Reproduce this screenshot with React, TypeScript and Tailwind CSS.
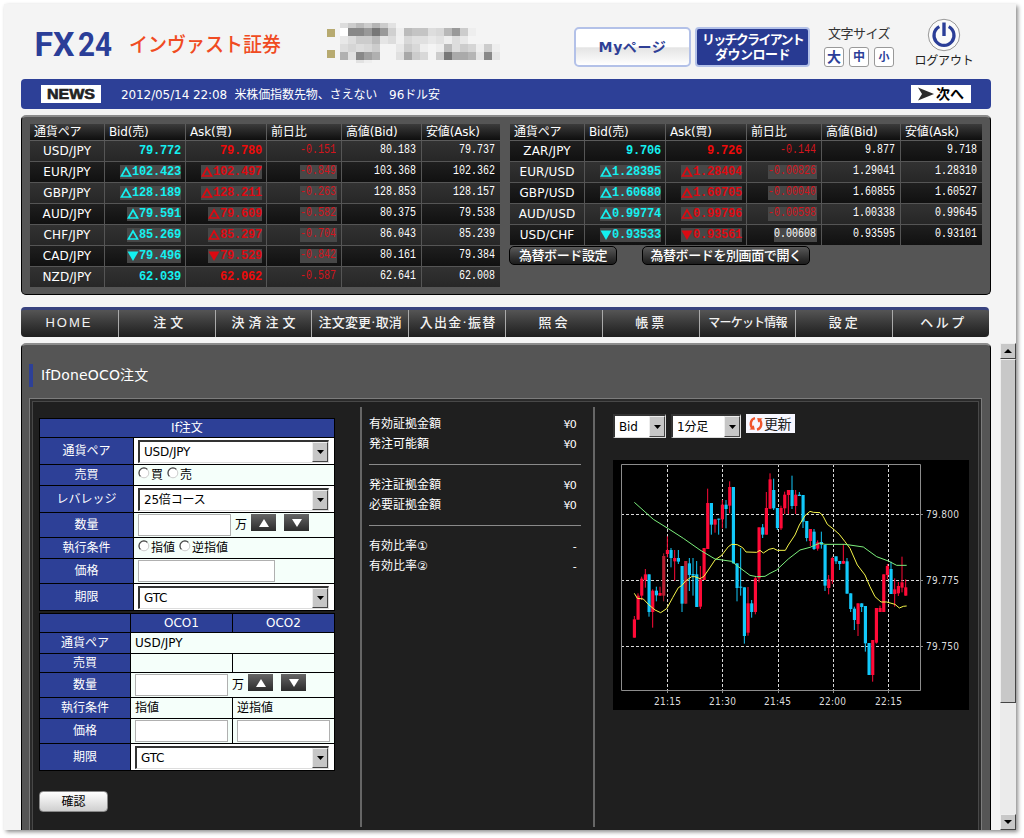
import { ReactNode } from "react"
import clsx from "clsx"

type Tick = "up" | "down" | ""

type Quote = {
  pair: string
  bid: string
  ask: string
  diff: string
  high: string
  low: string
  tick: Tick
}

const JPY_QUOTES: Quote[] = [
  { pair: "USD/JPY", bid: "79.772", ask: "79.780", diff: "-0.151", high: "80.183", low: "79.737", tick: "" },
  { pair: "EUR/JPY", bid: "102.423", ask: "102.497", diff: "-0.849", high: "103.368", low: "102.362", tick: "up" },
  { pair: "GBP/JPY", bid: "128.189", ask: "128.211", diff: "-0.263", high: "128.853", low: "128.157", tick: "up" },
  { pair: "AUD/JPY", bid: "79.591", ask: "79.609", diff: "-0.582", high: "80.375", low: "79.538", tick: "up" },
  { pair: "CHF/JPY", bid: "85.269", ask: "85.297", diff: "-0.704", high: "86.043", low: "85.239", tick: "up" },
  { pair: "CAD/JPY", bid: "79.496", ask: "79.529", diff: "-0.842", high: "80.161", low: "79.384", tick: "down" },
  { pair: "NZD/JPY", bid: "62.039", ask: "62.062", diff: "-0.587", high: "62.641", low: "62.008", tick: "" },
]

const OTHER_QUOTES: Quote[] = [
  { pair: "ZAR/JPY", bid: "9.706", ask: "9.726", diff: "-0.144", high: "9.877", low: "9.718", tick: "" },
  { pair: "EUR/USD", bid: "1.28395", ask: "1.28404", diff: "-0.00826", high: "1.29041", low: "1.28310", tick: "up" },
  { pair: "GBP/USD", bid: "1.60680", ask: "1.60705", diff: "-0.00040", high: "1.60855", low: "1.60527", tick: "up" },
  { pair: "AUD/USD", bid: "0.99774", ask: "0.99796", diff: "-0.00598", high: "1.00338", low: "0.99645", tick: "up" },
  { pair: "USD/CHF", bid: "0.93533", ask: "0.93561", diff: "0.00608", high: "0.93595", low: "0.93101", tick: "down" },
]

const HEADINGS = ["通貨ペア", "Bid(売)", "Ask(買)", "前日比", "高値(Bid)", "安値(Ask)"]

const Tri = ({ tick }: { tick: Tick }) => {
  if (!tick) return null
  return (
    <svg width="12" height="12" viewBox="0 0 12 12" className="shrink-0">
      {tick === "up" ? (
        <path d="M6 2 L10.6 10 H1.4 Z" fill="none" stroke="currentColor" strokeWidth="1.7" />
      ) : (
        <path d="M0.5 1.5 H11.5 L6 11 Z" fill="currentColor" />
      )}
    </svg>
  )
}

const Price = ({ value, tick, className }: { value: string; tick: Tick; className: string }) => (
  <span
    className={clsx(
      "flex h-[14px] items-center font-['Liberation_Mono',monospace] text-[12px] font-bold tracking-[-0.2px]",
      tick && "bg-[#474747]",
      className,
    )}
  >
    <Tri tick={tick} />
    {value}
  </span>
)

// narrow fixed pitch digits, stretched to the height of the bold prices
const Num = ({ value }: { value: string }) => (
  <span className="inline-block origin-center scale-y-[1.22] font-['Liberation_Mono',monospace] text-[10px] leading-[14px]">
    {value}
  </span>
)

const Board = ({ quotes, cols, dark }: { quotes: Quote[]; cols: string; dark: number }) => (
  <div className="text-white">
    <div className={clsx("grid h-[17px] bg-linear-to-b from-[#3c3c3c] to-[#0c0c0c]", cols)}>
      {HEADINGS.map((h) => (
        <div
          key={h}
          className="flex items-center border-r border-b border-[#5c5c5c] pl-1 text-[12px] leading-none tracking-[-0.15px] whitespace-nowrap last:border-r-0"
        >
          {h}
        </div>
      ))}
    </div>
    {quotes.map((q, i) => (
      <div
        key={q.pair}
        className={clsx(
          "grid h-[21px] bg-linear-to-b [&>div]:flex [&>div]:items-center [&>div]:justify-end [&>div]:border-r [&>div]:border-b [&>div]:border-[#555] [&>div]:pr-1 [&>div:last-child]:border-r-0",
          cols,
          i % 2 === dark ? "from-[#1f1f1f] to-[#101010]" : "from-[#323232] to-[#262626]",
        )}
      >
        <div className="!justify-center !pr-0 text-[12px] tracking-[0.1px]">{q.pair}</div>
        <div>
          <Price value={q.bid} tick={q.tick} className="text-[#14f0f0]" />
        </div>
        <div>
          <Price value={q.ask} tick={q.tick} className={q.tick ? "text-[#dc0a12]" : "text-[#f00a0a]"} />
        </div>
        <div>
          <span
            className={clsx(
              "flex h-[14px] pr-px",
              q.tick && "bg-[#474747]",
              q.diff.startsWith("-") ? "text-[#d2141c]" : "text-white",
            )}
          >
            <Num value={q.diff} />
          </span>
        </div>
        <div className="!pr-[5px]">
          <Num value={q.high} />
        </div>
        <div className="!pr-[5px]">
          <Num value={q.low} />
        </div>
      </div>
    ))}
  </div>
)

const BoardButton = ({ children, className }: { children: ReactNode; className: string }) => (
  <button
    className={clsx(
      "h-[19px] rounded-[5px] border border-black bg-linear-to-b from-[#5a5a5a] to-[#1c1c1c] text-[13px] leading-none font-medium tracking-[-0.4px] whitespace-nowrap text-white",
      className,
    )}
  >
    {children}
  </button>
)

// masked account name, one entry for each 8px cell
const MASK: { y: number; h: number; cells: string[] }[] = [
  { y: 23, h: 5, cells: ["ddd", "ccc", "bbb", "ccc", "b5b5b5", "ccc", "e2e2e2"] },
  { y: 28, h: 8, cells: ["fff", "888", "888", "999", "777", "999", "d0d0d0", "eee", "bbb", "c4c4c4", "c4c4c4", "ddd", "d8d8d8", "b8b8b8", "999", "ccc", "eee"] },
  { y: 36, h: 8, cells: ["e8e8e8", "ddd", "ccc", "ccc", "bbb", "e5e5e5", "ddd", "f0f0f0", "d8d8d8", "e0e0e0", "e0e0e0", "e8e8e8", "e2e2e2", "eee", "ddd", "e8e8e8"] },
  { y: 44, h: 8, cells: ["ddd", "d5d5d5", "ddd", "d8d8d8", "ccc", "", "", "e8e8e8", "ccc", "d8d8d8", "eee", "", "eee", "bbb", "ddd", "ccc", "d5d5d5", "eee", "ccc", "eee"] },
  { y: 52, h: 8, cells: ["b0b0b0", "e0e0e0", "888", "a0a0a0", "b0b0b0", "", "", "e0e0e0", "a8a8a8", "ccc", "d8d8d8", "", "ccc", "777", "aaa", "aaa", "b5b5b5", "e5e5e5", "888", "e5e5e5"] },
  { y: 60, h: 3, cells: ["", "", "e2e2e2", "eee"] },
]

const Header = () => (
  <header className="flex h-[75px]">
    <svg width="480" height="75" viewBox="21 4 480 75" className="shrink-0">
      <g className="font-['Roboto',sans-serif]" fontSize="33" fontWeight="700" fill="#2b3e98">
        <text x="34.5" y="56" textLength="40" lengthAdjust="spacingAndGlyphs">
          FX
        </text>
        <text x="78" y="56" textLength="34" lengthAdjust="spacingAndGlyphs">
          24
        </text>
      </g>
      <text x="129" y="52" fontSize="20" fontWeight="500" fill="#f04b22" textLength="152" lengthAdjust="spacingAndGlyphs">
        インヴァスト証券
      </text>
      <rect x="327" y="29" width="8" height="8" fill="#b7aa70" />
      <rect x="327" y="50" width="8" height="8" fill="#b7aa70" />
      {MASK.map((row) =>
        row.cells.map((c, i) =>
          c ? <rect key={`${row.y}-${i}`} x={340 + i * 8} y={row.y} width="8" height={row.h} fill={`#${c}`} /> : null,
        ),
      )}
    </svg>
    <button className="mt-[23px] ml-[73px] h-[40px] w-[117px] shrink-0 rounded-[5px] border-2 border-[#b3c1e8] bg-linear-to-b from-white from-50% via-[#e4e4e4] via-52% to-white text-[14px] leading-none font-bold tracking-[0.6px] text-[#2f3f96]">
      Myページ
    </button>
    <button className="mt-[23px] ml-[4px] flex h-[40px] w-[115px] shrink-0 flex-col items-center justify-center rounded-[4px] border-2 border-[#b3c1e8] bg-[#283a92] text-[13px] leading-[15px] font-bold whitespace-nowrap text-white">
      <span className="tracking-[-1.7px]">リッチクライアント</span>
      <span className="tracking-[-0.5px]">ダウンロード</span>
    </button>
    <div className="mt-[21px] ml-[14px] w-[70px] shrink-0 text-[#333]">
      <div className="h-[22px] pl-1 text-[13px] leading-[17px] tracking-[-0.5px] whitespace-nowrap">文字サイズ</div>
      <div className="flex gap-[5px] font-bold text-[#2b3e98]">
        <span className="flex size-5 items-center justify-center rounded-[3px] border border-[#999] bg-white text-[14px] leading-none">
          大
        </span>
        <span className="flex size-5 items-center justify-center rounded-[3px] border border-[#999] bg-white text-[12px] leading-none">
          中
        </span>
        <span className="flex size-5 items-center justify-center rounded-[3px] border border-[#999] bg-white text-[11px] leading-none">
          小
        </span>
      </div>
    </div>
    <div className="mt-[14px] ml-[19px] flex w-[62px] shrink-0 flex-col items-center text-[#222]">
      <svg width="34" height="34" viewBox="0 0 34 34">
        <circle cx="17" cy="17" r="15.7" fill="#fafafa" stroke="#999" />
        <path d="M12.3 8.6 A10 10 0 1 0 21.7 8.6" fill="none" stroke="#2b3e98" strokeWidth="3.2" />
        <path d="M17 4.5 V18" stroke="#2b3e98" strokeWidth="3.4" />
      </svg>
      <span className="text-[12px] leading-[19px] tracking-[-0.2px] whitespace-nowrap">ログアウト</span>
    </div>
  </header>
)

const NewsBar = () => (
  <div className="flex h-[30px] w-[970px] items-center rounded-[4px] bg-[#2d4097] text-[12px] text-white">
    <div className="ml-[20px] flex h-[18px] w-[60px] items-center justify-center bg-white">
      <svg width="50" height="14" viewBox="0 0 50 14" className="font-['Liberation_Sans',sans-serif]">
        <text x="1" y="12" fontSize="14" fontWeight="700" fill="#222" stroke="#222" strokeWidth="0.6" textLength="48" lengthAdjust="spacingAndGlyphs">
          NEWS
        </text>
      </svg>
    </div>
    <div className="ml-[20px] pt-px tracking-[-0.1px] whitespace-pre">2012/05/14 22:08  米株価指数先物、さえない　96ドル安</div>
    <div className="mr-[20px] ml-auto flex h-[18px] w-[60px] items-center justify-center bg-white text-[14px] leading-none font-bold text-black">
      <svg width="16" height="14" viewBox="0 0 16 14">
        <path d="M0 0.5 L16 7 L0 13.5 L4 7 Z" fill="#2c2c2c" />
      </svg>
      <span className="ml-0.5">次へ</span>
    </div>
  </div>
)

const NAV = [
  { label: "HOME", className: "pr-px font-['Liberation_Sans',sans-serif] tracking-[2px] text-[13px]" },
  { label: "注文", className: "pl-[7px] tracking-[4px] text-[13px]" },
  { label: "決済注文", className: "pl-[4px] tracking-[4px] text-[13px]" },
  { label: "注文変更·取消", className: "tracking-[0.2px] text-[13px]" },
  { label: "入出金·振替", className: "pl-[2px] tracking-[1.3px] text-[13px]" },
  { label: "照会", className: "pl-px tracking-[3px] text-[13px]" },
  { label: "帳票", className: "pl-px tracking-[3px] text-[13px]" },
  { label: "マーケット情報", className: "tracking-[-0.8px] text-[12px]" },
  { label: "設定", className: "pl-px tracking-[3px] text-[13px]" },
  { label: "ヘルプ", className: "pl-[5px] tracking-[2.5px] text-[13px]" },
]

const Nav = () => (
  <nav className="mt-3 grid h-[30px] w-[968px] grid-cols-10 overflow-hidden rounded-[4px] border-t-3 border-[#38427e] bg-linear-to-b from-[#555] to-[#1e1e1e]">
    {NAV.map((n) => (
      <div
        key={n.label}
        className={clsx(
          "flex items-center justify-center border-l border-[#aaa] pb-0.5 leading-none font-medium whitespace-nowrap text-[#f2f2f2] first:border-l-0",
          n.className,
        )}
      >
        {n.label}
      </div>
    ))}
  </nav>
)

const Select = ({ value, className }: { value: string; className: string }) => (
  <div
    className={clsx(
      "flex items-stretch border-t-2 border-l-2 border-r border-b border-t-[#333] border-r-[#ddd] border-b-[#ddd] border-l-[#333] bg-white text-[12px] text-black",
      className,
    )}
  >
    <span className="flex flex-1 items-center pl-[4px] leading-none tracking-[-0.2px] whitespace-nowrap">{value}</span>
    <span className="flex w-4 items-center justify-center border border-t-[#eee] border-r-[#444] border-b-[#444] border-l-[#eee] bg-[#c6c6c6]">
      <svg width="7" height="4" viewBox="0 0 7 4">
        <path d="M0 0 H7 L3.5 4 Z" fill="#000" />
      </svg>
    </span>
  </div>
)

const Field = ({ className }: { className: string }) => <div className={clsx("h-[22px] border border-[#b0b0b0] bg-white", className)} />

const Step = ({ down, className }: { down?: boolean; className: string }) => (
  <span className={clsx("flex h-[17px] w-[25px] items-center justify-center self-start bg-linear-to-b from-[#666] to-[#2c2c2c]", className)}>
    <svg width="10" height="8" viewBox="0 0 10 8">
      <path d={down ? "M0 0 H10 L5 8 Z" : "M5 0 L10 8 H0 Z"} fill="#fff" />
    </svg>
  </span>
)

const Radio = ({ label }: { label: string }) => (
  <span className="flex items-center">
    <svg width="12" height="12" viewBox="0 0 12 12" className="-mt-1 mr-px">
      <circle cx="6" cy="6" r="4.8" fill="#fff" stroke="#ccc" />
      <path d="M2.4 9.4 A4.8 4.8 0 0 1 9.4 2.4" fill="none" stroke="#444" strokeWidth="1.2" />
    </svg>
    {label}
  </span>
)

const Label = ({ children }: { children?: ReactNode }) => (
  <div className="flex items-center justify-center bg-[#2d4097] leading-none text-white">{children}</div>
)

const Cell = ({ children, className }: { children?: ReactNode; className?: string }) => (
  <div className={clsx("flex items-center pl-1 leading-none", className ?? "bg-[#f5fffa]")}>{children}</div>
)

const IfOrder = () => (
  <div className="grid w-[296px] grid-cols-[93px_200px] grid-rows-[18px_26px_20px_26px_24px_20px_24px_26px] gap-px bg-black p-px text-[12px] text-black">
    <div className="col-span-2 flex items-center justify-center bg-[#2d4097] leading-none text-white">If注文</div>
    <Label>通貨ペア</Label>
    <Cell className="bg-white">
      <Select value="USD/JPY" className="h-[23px] w-[191px]" />
    </Cell>
    <Label>売買</Label>
    <Cell>
      <div className="flex gap-1">
        <Radio label="買" />
        <Radio label="売" />
      </div>
    </Cell>
    <Label>レバレッジ</Label>
    <Cell className="bg-white">
      <Select value="25倍コース" className="h-[23px] w-[191px]" />
    </Cell>
    <Label>数量</Label>
    <Cell>
      <Field className="w-[93px]" />
      <span className="ml-1">万</span>
      <Step className="mt-px ml-1" />
      <Step down className="mt-px ml-2" />
    </Cell>
    <Label>執行条件</Label>
    <Cell>
      <div className="flex gap-1">
        <Radio label="指値" />
        <Radio label="逆指値" />
      </div>
    </Cell>
    <Label>価格</Label>
    <Cell>
      <Field className="w-[137px]" />
    </Cell>
    <Label>期限</Label>
    <Cell className="bg-white">
      <Select value="GTC" className="h-[23px] w-[191px]" />
    </Cell>
  </div>
)

const OcoOrder = () => (
  <div className="mt-0.5 grid w-[296px] grid-cols-[90px_101px_101px] grid-rows-[18px_20px_18px_24px_20px_24px_26px] gap-px bg-black p-px text-[12px] text-black">
    <Label />
    <Label>OCO1</Label>
    <Label>OCO2</Label>
    <Label>通貨ペア</Label>
    <Cell className="col-span-2 bg-[#f5fffa]">USD/JPY</Cell>
    <Label>売買</Label>
    <Cell />
    <Cell />
    <Label>数量</Label>
    <Cell className="col-span-2 bg-[#f5fffa]">
      <Field className="w-[93px]" />
      <span className="ml-1">万</span>
      <Step className="mt-px ml-1" />
      <Step down className="mt-px ml-2" />
    </Cell>
    <Label>執行条件</Label>
    <Cell>指値</Cell>
    <Cell>逆指値</Cell>
    <Label>価格</Label>
    <Cell>
      <Field className="w-[93px]" />
    </Cell>
    <Cell>
      <Field className="w-[93px]" />
    </Cell>
    <Label>期限</Label>
    <Cell className="col-span-2 bg-white">
      <Select value="GTC" className="h-[23px] w-[194px]" />
    </Cell>
  </div>
)

const SUMMARY = [
  [
    ["有効証拠金額", "¥0"],
    ["発注可能額", "¥0"],
  ],
  [
    ["発注証拠金額", "¥0"],
    ["必要証拠金額", "¥0"],
  ],
  [
    ["有効比率①", "-"],
    ["有効比率②", "-"],
  ],
]

const Summary = () => (
  <div className="w-[235px] border-x-2 border-[#666] pl-[7px] text-[12px] text-white">
    {SUMMARY.map((group) => (
      <div
        key={group[0][0]}
        className="flex h-[58px] w-[212px] flex-col border-b border-[#8a8a8a] pt-[7px] pr-[5px] not-first:h-[61px] not-first:pt-[10px] last:border-b-0"
      >
        {group.map(([name, value]) => (
          <div key={name} className="flex h-5 items-center justify-between leading-none">
            <span>{name}</span>
            <span className="text-[11px] tracking-[-0.8px]">{value}</span>
          </div>
        ))}
      </div>
    ))}
  </div>
)

// colour, body top, body bottom, high, low: one candle a minute, in thirds of a pixel
const CANDLES: [string, number, number, number, number][] = [
  ["r", 478, 533, 468, 533], ["r", 407, 479, 400, 479], ["r", 356, 407, 350, 420], ["r", 343, 360, 327, 383],
  ["b", 343, 456, 343, 470], ["r", 392, 456, 388, 503], ["b", 392, 406, 380, 424], ["r", 399, 407, 380, 407],
  ["d", 288, 407, 280, 424], ["r", 270, 282, 229, 292], ["b", 270, 294, 264, 322], ["r", 294, 304, 270, 362],
  ["b", 294, 305, 270, 312], ["b", 318, 431, 318, 456], ["d", 303, 431, 303, 431], ["b", 310, 345, 294, 393],
  ["b", 342, 347, 294, 407], ["b", 343, 441, 303, 441], ["r", 358, 440, 318, 447], ["r", 264, 360, 264, 360],
  ["r", 129, 267, 86, 267], ["b", 129, 194, 129, 224], ["r", 178, 194, 178, 218], ["b", 176, 179, 176, 224],
  ["r", 134, 178, 120, 205], ["b", 134, 147, 120, 205], ["r", 81, 137, 64, 160], ["b", 81, 310, 81, 310],
  ["b", 310, 384, 310, 424], ["b", 380, 383, 264, 407], ["b", 382, 528, 382, 551], ["r", 430, 518, 381, 527],
  ["b", 430, 456, 420, 473], ["r", 355, 456, 350, 463], ["r", 202, 355, 202, 367], ["b", 202, 224, 192, 234],
  ["r", 144, 224, 96, 224], ["r", 58, 146, 40, 147], ["b", 90, 145, 56, 150], ["b", 144, 204, 144, 210],
  ["r", 144, 205, 137, 210], ["r", 104, 145, 95, 162], ["r", 90, 105, 90, 162], ["b", 90, 138, 47, 147],
  ["r", 104, 138, 90, 162], ["b", 104, 108, 96, 108], ["b", 105, 185, 105, 204], ["b", 183, 234, 183, 244],
  ["r", 207, 243, 207, 258], ["b", 215, 267, 207, 270], ["r", 247, 266, 241, 272], ["b", 246, 254, 215, 266],
  ["b", 255, 377, 255, 393], ["r", 358, 384, 345, 403], ["r", 294, 360, 290, 372], ["b", 289, 304, 289, 312],
  ["b", 303, 312, 303, 330], ["r", 303, 311, 252, 312], ["b", 304, 401, 294, 401], ["b", 400, 447, 400, 456],
  ["b", 446, 480, 440, 510], ["r", 430, 492, 430, 528], ["b", 430, 441, 430, 456], ["b", 438, 550, 438, 575],
  ["b", 549, 645, 549, 645], ["r", 540, 645, 540, 665], ["r", 444, 548, 444, 551], ["r", 444, 456, 437, 456],
  ["r", 343, 456, 343, 456], ["r", 318, 345, 312, 358], ["b", 327, 402, 305, 402], ["r", 388, 402, 355, 440],
  ["r", 378, 400, 366, 408], ["r", 367, 383, 290, 397], ["r", 382, 407, 358, 407],
]

const CANDLE_FILL: Record<string, string> = { r: "#ff0a37", d: "#b81e30", b: "#12c8fa" }

const SHORT_MA =
  "64,400 73,415 91,417 106,433 126,450 143,458 161,446 179,413 196,383 206,377 218,363 236,350 246,350 261,356 273,349 286,330 306,300 326,286 346,260 356,253 373,254 389,263 399,276 431,277 441,271 451,279 468,268 481,265 493,271 517,271 526,255 546,225 559,195 576,167 591,154 601,157 621,158 631,170 643,193 661,207 679,223 696,245 711,265 733,315 756,345 771,380 786,410 804,426 821,426 846,433 859,444 871,439 881,438"

const LONG_MA =
  "64,127 121,178 166,206 211,235 261,270 306,297 356,304 376,320 411,346 431,350 456,349 471,340 491,330 526,297 561,270 591,262 621,249 636,253 696,253 751,261 791,290 826,303 851,316 881,316"

const Chart = () => (
  <svg width="356" height="250" viewBox="0 0 356 250" className="mt-[22px] bg-black">
    <g stroke="#d8d8d8" strokeWidth="1" strokeDasharray="3 2" shapeRendering="crispEdges">
      {[54, 109, 165, 220, 275].map((x) => (
        <path key={x} d={`M${x + 0.5} 4 V230`} />
      ))}
      {[54, 120, 186].map((y) => (
        <path key={y} d={`M8 ${y + 0.5} H307`} />
      ))}
    </g>
    <path d="M8.5 4.5 H307.5 V230.5 H8.5 Z" fill="none" stroke="#8c8c8c" />
    <path
      d="M307 54.5 h3 M307 120.5 h3 M307 186.5 h3 M54.5 230 v3 M109.5 230 v3 M165.5 230 v3 M220.5 230 v3 M275.5 230 v3"
      stroke="#8c8c8c"
    />
    <g transform="scale(0.33333)">
      {CANDLES.map(([c, top, bottom, high, low], i) => (
        <g key={i} fill={CANDLE_FILL[c]}>
          <rect x={64 + i * 11 - 1.5} y={high} width="3" height={low - high} />
          <rect x={64 + i * 11 - 4.5} y={top} width="9.5" height={bottom - top} />
        </g>
      ))}
      <polyline points={SHORT_MA} fill="none" stroke="#f6f64a" strokeWidth="3" />
      <polyline points={LONG_MA} fill="none" stroke="#7cf07c" strokeWidth="3" />
    </g>
    <g fill="#dcdcdc" fontSize="10" className="font-['DejaVu_Sans_Condensed','DejaVu_Sans',sans-serif]">
      <text x="313" y="58" textLength="33">79.800</text>
      <text x="313" y="124" textLength="33">79.775</text>
      <text x="313" y="190" textLength="33">79.750</text>
      <text x="41" y="245" textLength="27">21:15</text>
      <text x="96" y="245" textLength="27">21:30</text>
      <text x="151" y="245" textLength="27">21:45</text>
      <text x="206" y="245" textLength="27">22:00</text>
      <text x="262" y="245" textLength="27">22:15</text>
    </g>
  </svg>
)

const ChartPane = () => (
  <div className="ml-[18px] pt-[7px]">
    <div className="flex items-start gap-[5px]">
      <Select value="Bid" className="h-6 w-[53px]" />
      <Select value="1分足" className="h-6 w-[70px]" />
      <button className="flex h-[19px] w-[49px] items-center bg-[#f7f7ff] text-[14px] leading-none whitespace-nowrap text-[#222]">
        <svg width="16" height="16" viewBox="0 0 16 16" className="ml-[2px] shrink-0" fill="none" stroke="#f0552c" strokeWidth="2.4">
          <path d="M7 2.2 C2.5 3.2 1.4 9 4.6 12.4" />
          <path d="M9 13.6 C13.5 12.6 14.6 7 11.4 3.4" />
          <path d="M1.5 13.4 L6.8 13.8 L5.8 9.2 Z" fill="#f0552c" stroke="none" />
          <path d="M14.5 2.4 L9.2 2 L10.2 6.6 Z" fill="#f0552c" stroke="none" />
        </svg>
        <span className="tracking-[-0.5px]">更新</span>
      </button>
    </div>
    <Chart />
  </div>
)

const ScrollArrow = ({ down }: { down?: boolean }) => (
  <span className="flex h-4 items-center justify-center border border-t-[#eee] border-r-[#444] border-b-[#444] border-l-[#eee] bg-[#c8c8c8]">
    <svg width="8" height="4" viewBox="0 0 8 4">
      <path d={down ? "M0 0 H8 L4 4 Z" : "M4 0 L8 4 H0 Z"} fill="#000" />
    </svg>
  </span>
)

const App = () => {
  return (
    <div className="h-[838px] w-[1024px] overflow-hidden bg-white pt-1 pl-1 font-['DejaVu_Sans','Noto_Sans_CJK_JP',sans-serif]">
      <div className="h-[826px] w-[1012px] bg-[#f4f4f4] pl-[17px] shadow-[2px_2px_4px_rgba(0,0,0,0.45)]">
        <Header />
        <NewsBar />

        <section className="mt-[6px] flex h-[180px] w-[970px] gap-[10px] rounded-[5px] border border-t-2 border-t-[#8c8c8c] border-r-black border-b-black border-l-black bg-[#555] pt-[7px] pl-2">
          <Board quotes={JPY_QUOTES} cols="grid-cols-[75px_81px_81px_75px_80px_78px]" dark={1} />
          <div>
            <Board quotes={OTHER_QUOTES} cols="grid-cols-[75px_81px_81px_75px_79px_81px]" dark={0} />
            <div className="flex">
              <BoardButton className="-ml-px w-[108px]">為替ボード設定</BoardButton>
              <BoardButton className="ml-[25px] w-[168px]">為替ボードを別画面で開く</BoardButton>
            </div>
          </div>
        </section>

        <Nav />

        <div className="mt-[6px] flex h-[487px]">
          <section className="w-[970px] shrink-0 overflow-hidden rounded-t-[5px] border border-t-2 border-b-0 border-t-[#8c8c8c] border-r-black border-l-black bg-[#555] pl-[7px]">
            <div className="flex h-[53px] items-start pt-[19px]">
              <div className="h-[23px] w-[4px] bg-[#2d4097]" />
              <h1 className="ml-[8px] text-[14px] leading-[22px] font-normal tracking-[0.15px] text-white">IfDoneOCO注文</h1>
            </div>
            <div className="w-[953px] border border-b-0 border-[#7c7c7c] bg-[#2a2a2a] px-[2px] pt-[2px]">
              <div className="flex h-[430px] border border-[#484848] bg-[#1f1f1f]">
                <div className="w-[327px] pt-[16px] pl-[6px]">
                  <IfOrder />
                  <OcoOrder />
                  <button className="mt-[20px] h-[21px] w-[69px] rounded-[4px] border border-[#888] bg-linear-to-b from-white to-[#cfcfcf] text-[12px] leading-none text-black">
                    確認
                  </button>
                </div>
                <div className="mt-[5px] flex h-[420px]">
                  <Summary />
                  <ChartPane />
                </div>
              </div>
            </div>
          </section>
          <div className="ml-[9px] flex w-4 shrink-0 flex-col bg-[#ebebeb]">
            <ScrollArrow />
            <span className="h-[344px] border border-t-[#eee] border-r-[#444] border-b-[#444] border-l-[#eee] bg-[#c8c8c8]" />
            <span className="flex-1" />
            <ScrollArrow down />
          </div>
        </div>
      </div>
    </div>
  )
}

export default App
